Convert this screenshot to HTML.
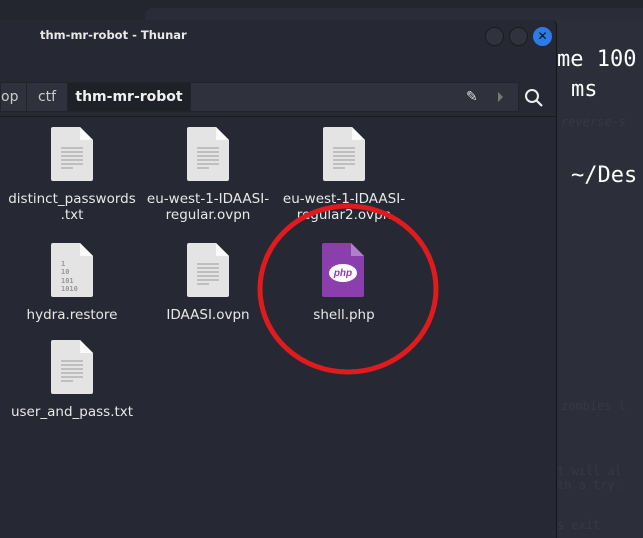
<!DOCTYPE html><html><head><style>
body{margin:0;width:643px;height:538px;overflow:hidden;background:#2b2e39;font-family:"DejaVu Sans","Liberation Sans",sans-serif;position:relative}
.top{position:absolute;left:0;top:0;width:643px;height:20px;background:#23252f}
.top2{position:absolute;left:145px;top:8px;width:498px;height:20px;background:#2a2d38;border-radius:8px 0 0 0}
.term{position:absolute;left:557px;top:20px;right:0;bottom:0;background:#2c2f3a;font-family:"DejaVu Sans Mono","Liberation Mono",monospace;color:#fff;font-size:22px}
.win{position:absolute;left:0;top:20px;width:556px;height:518px;background:#262833;border-right:1px solid #15161b;border-top-right-radius:6px}
.title{position:absolute;left:40px;top:8px;font-size:11.5px;font-weight:bold;color:#e8e8e8}
.btn{position:absolute;top:7px;width:17px;height:17px;border-radius:50%;background:#30333e;border:1px solid #1a1b20}
.path{position:absolute;left:0;top:62px;width:517px;height:28px;background:#2f323d;border:1px solid #22242b}
.seg{position:absolute;top:0;height:28px;line-height:28px;font-size:14px;color:#ccc;border-right:1px solid #22242b}
.sep{position:absolute;left:0;top:96px;width:556px;height:1px;background:#1c1d23}
.ic{position:absolute;width:42px;height:54px}
.lab{position:absolute;width:136px;text-align:center;font-size:13.5px;color:#e8e8e8;line-height:16px}
.f{position:absolute;font-size:12px;color:#363945}
</style></head><body>
<div class="top"></div><div class="top2"></div>
<div class="term">
<div style="position:absolute;left:0;top:27px">me 100</div>
<div style="position:absolute;left:14px;top:57px">ms</div>
<div style="position:absolute;left:14px;top:143px">~/Des</div>
<div class="f" style="left:4px;top:95px;font-style:italic">reverse-s</div>
<div class="f" style="left:4px;top:379px">zombies l</div>
<div class="f" style="left:0;top:444px">t will al<br>th a try.</div>
<div class="f" style="left:0;top:498px">s exit</div>
</div>
<div class="win">
<div class="title">thm-mr-robot - Thunar</div>
<div class="btn" style="left:485px"></div><div class="btn" style="left:509px"></div>
<div class="btn" style="left:533px;background:#2d7be6;border-color:#2d7be6;color:#111;font-size:12px;text-align:center;line-height:17px;font-weight:bold">✕</div>
<div class="path">
<div class="seg" style="left:0;width:25px;padding-left:0">op</div>
<div class="seg" style="left:26px;width:40px;text-align:center">ctf</div>
<div class="seg" style="left:67px;width:122px;text-align:center;background:#1f2129;color:#f0f0f0;font-weight:bold">thm-mr-robot</div>
<div style="position:absolute;left:465px;top:6px;color:#ddd;font-size:14px">✎</div>
<div style="position:absolute;left:497px;top:9px;width:0;height:0;border-left:5px solid #777;border-top:5px solid transparent;border-bottom:5px solid transparent"></div>
</div>
<svg style="position:absolute;left:523px;top:67px" width="22" height="22"><circle cx="9" cy="9" r="6" fill="none" stroke="#eee" stroke-width="2"/><line x1="13" y1="13" x2="19" y2="19" stroke="#eee" stroke-width="2.2"/></svg>
<div class="sep"></div>
</div>
<svg width="0" height="0" style="position:absolute"><defs>
<g id="doc"><path d="M2 0H29L42 13V52Q42 54 40 54H2Q0 54 0 52V2Q0 0 2 0Z" fill="#e4e4e4"/><path d="M29 0V13H42Z" fill="#fafafa"/></g>
<g id="lines" stroke="#9a9a9a" stroke-width="1"><line x1="10" y1="21" x2="32" y2="21"/><line x1="10" y1="25" x2="32" y2="25"/><line x1="10" y1="29" x2="32" y2="29"/><line x1="10" y1="33" x2="32" y2="33"/><line x1="10" y1="37" x2="32" y2="37"/><line x1="10" y1="41" x2="22" y2="41"/></g>
</defs></svg>
<svg class="ic" style="left:51px;top:127px"><use href="#doc"/><use href="#lines"/></svg>
<svg class="ic" style="left:187px;top:127px"><use href="#doc"/><use href="#lines"/></svg>
<svg class="ic" style="left:323px;top:127px"><use href="#doc"/><use href="#lines"/></svg>
<svg class="ic" style="left:51px;top:243px"><use href="#doc"/><text x="10" y="23" font-size="7" fill="#999" font-weight="bold" font-family="DejaVu Sans Mono">1</text><text x="10" y="31" font-size="7" fill="#999" font-weight="bold" font-family="DejaVu Sans Mono">10</text><text x="10" y="40" font-size="7" fill="#999" font-weight="bold" font-family="DejaVu Sans Mono">101</text><text x="10" y="48" font-size="7" fill="#999" font-weight="bold" font-family="DejaVu Sans Mono">1010</text></svg>
<svg class="ic" style="left:187px;top:243px"><use href="#doc"/><use href="#lines"/></svg>
<svg class="ic" style="left:322px;top:243px"><path d="M2 0H29L42 13V52Q42 54 40 54H2Q0 54 0 52V2Q0 0 2 0Z" fill="#8a3fac"/><path d="M29 0V13H42Z" fill="#b27fcb"/><ellipse cx="21" cy="30" rx="14" ry="9" fill="#fff"/><text x="21" y="33" text-anchor="middle" font-size="10" font-style="italic" font-weight="bold" fill="#8a3fac" font-family="Liberation Sans">php</text></svg>
<svg class="ic" style="left:51px;top:340px"><use href="#doc"/><use href="#lines"/></svg>
<div class="lab" style="left:4px;top:191px">distinct_passwords<br>.txt</div>
<div class="lab" style="left:140px;top:191px">eu-west-1-IDAASI-<br>regular.ovpn</div>
<div class="lab" style="left:276px;top:191px">eu-west-1-IDAASI-<br>regular2.ovpn</div>
<div class="lab" style="left:4px;top:307px">hydra.restore</div>
<div class="lab" style="left:140px;top:307px">IDAASI.ovpn</div>
<div class="lab" style="left:276px;top:307px">shell.php</div>
<div class="lab" style="left:4px;top:404px">user_and_pass.txt</div>
<svg style="position:absolute;left:250px;top:195px" width="200" height="190"><ellipse cx="98" cy="94" rx="88" ry="83" fill="none" stroke="#e01b1e" stroke-width="5"/></svg>
</body></html>
